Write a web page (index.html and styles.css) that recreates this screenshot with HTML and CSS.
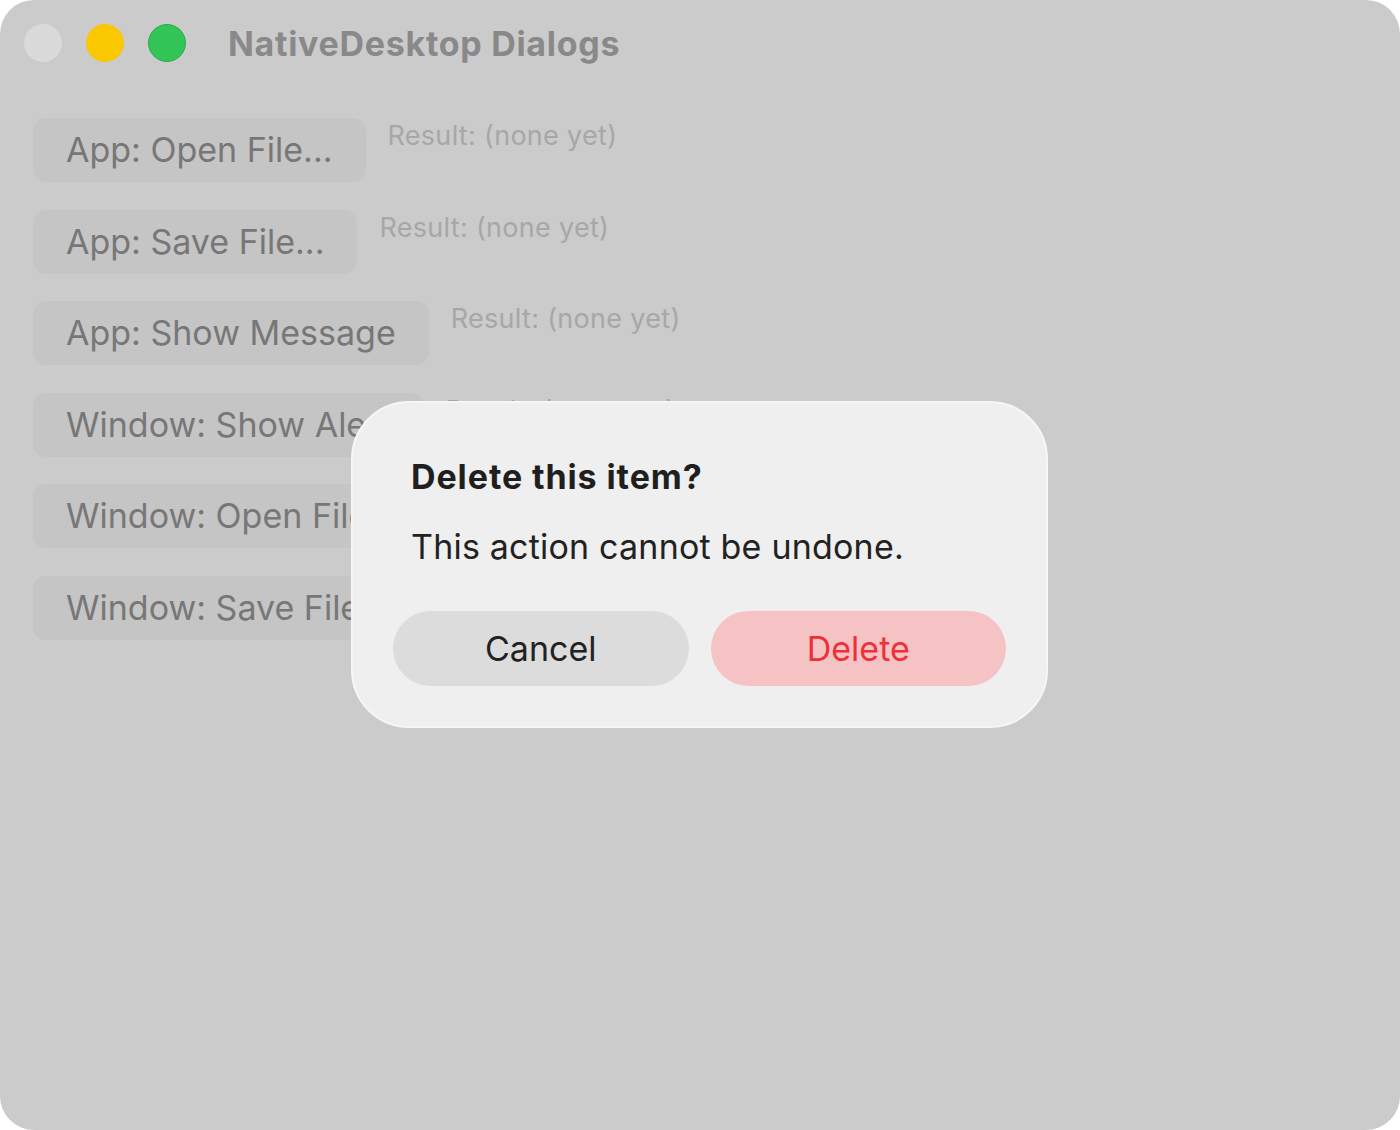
FILE: index.html
```html
<!DOCTYPE html>
<html>
<head>
<meta charset="utf-8">
<link rel="stylesheet" href="styles.css">
</head>
<body>
<div class="window">
  <div class="titlebar">
    <div class="lights">
      <span class="light gray"></span>
      <span class="light yellow"></span>
      <span class="light green"></span>
    </div>
    <div class="title">NativeDesktop Dialogs</div>
  </div>
  <div class="content">
    <div class="row"><div class="btn">App: Open File...</div><div class="result">Result: (none yet)</div></div>
    <div class="row"><div class="btn">App: Save File...</div><div class="result">Result: (none yet)</div></div>
    <div class="row"><div class="btn">App: Show Message</div><div class="result">Result: (none yet)</div></div>
    <div class="row"><div class="btn">Window: Show Alert</div><div class="result">Result: (none yet)</div></div>
    <div class="row"><div class="btn">Window: Open File...</div><div class="result">Result: (none yet)</div></div>
    <div class="row"><div class="btn">Window: Save File...</div><div class="result">Result: (none yet)</div></div>
  </div>
  <div class="dialog">
    <div class="d-title">Delete this item?</div>
    <div class="d-body">This action cannot be undone.</div>
    <div class="d-actions">
      <div class="d-btn cancel">Cancel</div>
      <div class="d-btn delete">Delete</div>
    </div>
  </div>
</div>
</body>
</html>
```
FILE: styles.css
```css
html, body {
  margin: 0;
  padding: 0;
  background: #ffffff;
}
body {
  font-family: Inter, "Noto Sans", sans-serif;
}
.window {
  position: relative;
  width: 1400px;
  height: 1130px;
  background: #cbcbcb;
  border-radius: 34px;
  overflow: hidden;
}
.titlebar {
  display: flex;
  align-items: center;
  height: 86px;
  padding-left: 24px;
}
.lights {
  display: flex;
  gap: 24px;
}
.light {
  width: 38px;
  height: 38px;
  border-radius: 50%;
  box-sizing: border-box;
}
.light.gray { background: #dadada; }
.light.yellow { background: #f9c800; }
.light.green { background: #33c557; border: 1px solid #26ad48; }
.title {
  margin-left: 42px;
  font-size: 34px;
  font-weight: 700;
  color: #898989;
  letter-spacing: 0.7px;
}
.content {
  display: flex;
  flex-direction: column;
  gap: 27.5px;
  padding: 32px 0 0 33px;
}
.row {
  display: flex;
  align-items: flex-start;
  gap: 22px;
}
.btn {
  height: 64px;
  line-height: 64px;
  padding: 0 33px;
  background: #c5c5c5;
  border-radius: 13px;
  font-size: 34px;
  color: #777777;
  letter-spacing: 0;
}
.result {
  line-height: 36px;
  font-size: 27px;
  color: #a7a7a7;
  letter-spacing: 0.3px;
}
.dialog {
  position: absolute;
  left: 351px;
  top: 401px;
  width: 697px;
  height: 327px;
  box-sizing: border-box;
  padding: 54px 40px 40px 40px;
  background: #efefef;
  border: 2px solid #f6f6f6;
  border-radius: 58px;
  display: flex;
  flex-direction: column;
}
.d-title {
  padding-left: 18px;
  font-size: 34px;
  line-height: 40px;
  font-weight: 700;
  color: #1f1f1f;
  letter-spacing: 0.9px;
}
.d-body {
  margin-top: 30px;
  padding-left: 18px;
  font-size: 34px;
  line-height: 40px;
  color: #222222;
  letter-spacing: 0.2px;
}
.d-actions {
  margin-top: 44px;
  display: flex;
  gap: 22px;
}
.d-btn {
  flex: 1;
  height: 75px;
  line-height: 75px;
  border-radius: 38px;
  text-align: center;
  font-size: 34px;
}
.d-btn.cancel {
  background: #dcdcdc;
  color: #222222;
}
.d-btn.delete {
  background: #f5c3c4;
  color: #ef2f3a;
}
```
